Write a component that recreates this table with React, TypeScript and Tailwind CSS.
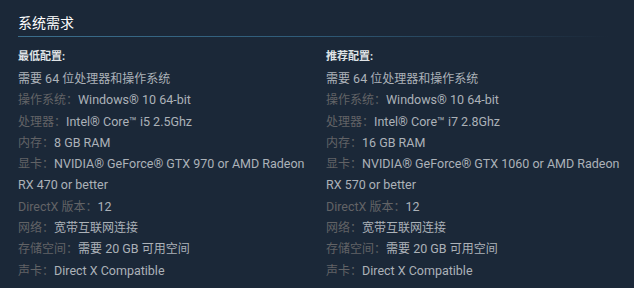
const FONT = "font-['Roboto','Noto_Sans_CJK_SC',sans-serif]";

type Row = { label?: string; value: string };

const MIN: Row[] = [
  { value: "需要 64 位处理器和操作系统" },
  { label: "操作系统：", value: "Windows® 10 64-bit" },
  { label: "处理器：", value: "Intel® Core™ i5 2.5Ghz" },
  { label: "内存：", value: "8 GB RAM" },
  { label: "显卡：", value: "NVIDIA® GeForce® GTX 970 or AMD Radeon RX 470 or better" },
  { label: "DirectX 版本：", value: "12" },
  { label: "网络：", value: "宽带互联网连接" },
  { label: "存储空间：", value: "需要 20 GB 可用空间" },
  { label: "声卡：", value: "Direct X Compatible" },
];

const REC: Row[] = [
  { value: "需要 64 位处理器和操作系统" },
  { label: "操作系统：", value: "Windows® 10 64-bit" },
  { label: "处理器：", value: "Intel® Core™ i7 2.8Ghz" },
  { label: "内存：", value: "16 GB RAM" },
  { label: "显卡：", value: "NVIDIA® GeForce® GTX 1060 or AMD Radeon RX 570 or better" },
  { label: "DirectX 版本：", value: "12" },
  { label: "网络：", value: "宽带互联网连接" },
  { label: "存储空间：", value: "需要 20 GB 可用空间" },
  { label: "声卡：", value: "Direct X Compatible" },
];

// Chinese glyphs in the shot are a touch smaller than the latin text
function Mixed({ text }: { text: string }) {
  const parts = text.split(/([\u3000-\u9fff\uff00-\uffef]+)/);
  return (
    <>
      {parts.map((p, i) =>
        /[\u3000-\u9fff\uff00-\uffef]/.test(p) ? (
          <span key={i} className="text-[12px] leading-none">{p}</span>
        ) : (
          p
        )
      )}
    </>
  );
}

function ReqColumn({ title, rows, width }: { title: string; rows: Row[]; width: string }) {
  return (
    <div className={width}>
      <div className="text-[11px] font-bold leading-[14px] text-[#dfe3e6]">{title}</div>
      <ul className="mt-[4px]">
        {rows.map((r, i) => (
          <li key={i} className="text-[12.5px] leading-[21.3px] text-[#acb2b8]">
            {r.label && (
              <span className="text-[#626366]">
                <Mixed text={r.label} />
              </span>
            )}
            <Mixed text={r.value} />
          </li>
        ))}
      </ul>
    </div>
  );
}

export default function App() {
  return (
    <div className={`w-[634px] h-[288px] bg-[#1b2838] pl-[18px] pr-[4px] pt-[13px] ${FONT}`}>
      <h2 className="text-[14px] leading-[20px] text-white">系统需求</h2>
      <div className="mt-[3px] h-px w-[590px] bg-gradient-to-r from-[#3b6e8c] via-[#2f5b78] to-[#1b2838]" />
      <div className="mt-[13px] flex gap-x-[8px]">
        <ReqColumn title="最低配置:" rows={MIN} width="w-[300px]" />
        <ReqColumn title="推荐配置:" rows={REC} width="w-[304px]" />
      </div>
    </div>
  );
}
